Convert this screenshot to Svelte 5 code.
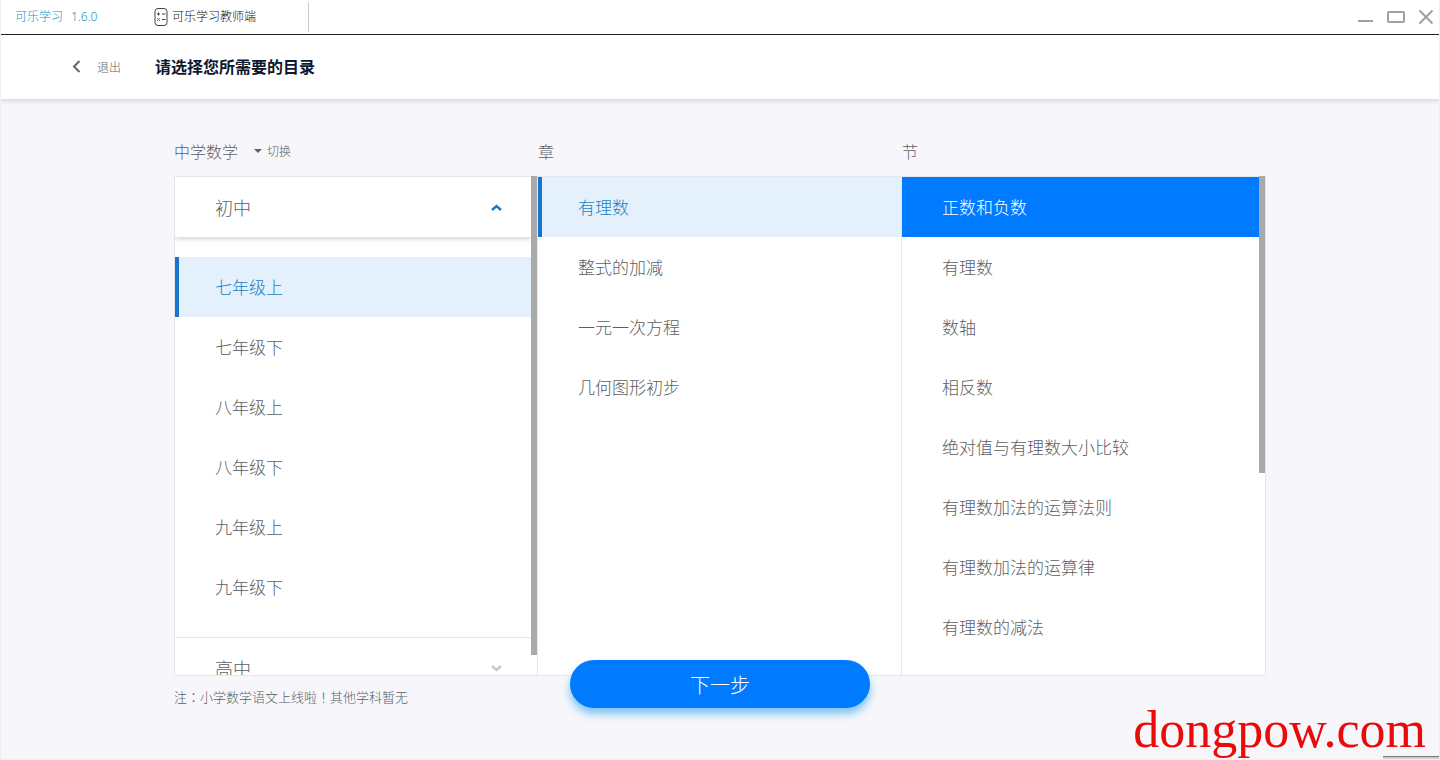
<script lang="ts">
	const grades = ['七年级上', '七年级下', '八年级上', '八年级下', '九年级上', '九年级下'];
	const chapters = ['有理数', '整式的加减', '一元一次方程', '几何图形初步'];
	const sections = [
		'正数和负数',
		'有理数',
		'数轴',
		'相反数',
		'绝对值与有理数大小比较',
		'有理数加法的运算法则',
		'有理数加法的运算律',
		'有理数的减法'
	];

	let grade = $state('七年级上');
	let chapter = $state('有理数');
	let section = $state('正数和负数');
	let juniorOpen = $state(true);
</script>

<div class="window">
	<div class="titlebar">
		<div class="brand"><span>可乐学习</span><span>1.6.0</span></div>
		<button class="tab">
			<svg width="14" height="20" viewBox="0 0 14 20" fill="none" stroke="#444" stroke-width="1">
				<rect x="1" y="1.5" width="12" height="17" rx="3" />
				<path d="M3 7h3M4.5 5.5v3M8 7h3.5M3.3 11.3l2.4 2.4M5.7 11.3l-2.4 2.4M8 12.5h3.5" />
			</svg>
			可乐学习教师端
		</button>
		<div class="window-controls">
			<button aria-label="最小化">
				<svg width="16" height="16" viewBox="0 0 16 16"><path d="M0 12h15" /></svg>
			</button>
			<button aria-label="最大化">
				<svg width="20" height="16" viewBox="0 0 20 16"><rect x="2" y="3" width="16" height="10" rx="1" /></svg>
			</button>
			<button aria-label="关闭">
				<svg width="16" height="16" viewBox="0 0 16 16"><path d="M1.5 1.5l13 13M14.5 1.5l-13 13" /></svg>
			</button>
		</div>
	</div>

	<header class="header">
		<button class="back">
			<svg width="10" height="14" viewBox="0 0 10 14" fill="none" stroke="#666" stroke-width="2">
				<path d="M8.5 1L3 6.5L8.5 12" />
			</svg>
			退出
		</button>
		<h1>请选择您所需要的目录</h1>
	</header>

	<main class="content">
		<div class="labels">
			<div class="label">
				中学数学
				<button class="switch"><i class="caret"></i>切换</button>
			</div>
			<div class="label">章</div>
			<div class="label">节</div>
		</div>

		<div class="board">
			<div class="column">
				<div class="list">
					<button class="group" class:open={juniorOpen} onclick={() => (juniorOpen = !juniorOpen)}>
						初中
						<svg width="12" height="8" viewBox="0 0 12 8" fill="none" stroke="#1478cc" stroke-width="2.4">
							<path d="M2 7l4.5-4 4.5 4" />
						</svg>
					</button>
					{#if juniorOpen}
						<div class="grades">
							{#each grades as name}
								<button class="item" class:active={grade === name} onclick={() => (grade = name)}>{name}</button>
							{/each}
						</div>
					{/if}
					<button class="group next-group">
						高中
						<svg width="12" height="8" viewBox="0 0 12 8" fill="none" stroke="#c8c8cc" stroke-width="2.4">
							<path d="M2 2l4.5 4 4.5-4" />
						</svg>
					</button>
				</div>
				<div class="track"><div class="thumb" style="height: 96%"></div></div>
			</div>

			<div class="column">
				<div class="list">
					{#each chapters as name}
						<button class="item" class:active={chapter === name} onclick={() => (chapter = name)}>{name}</button>
					{/each}
				</div>
			</div>

			<div class="column">
				<div class="list">
					{#each sections as name}
						<button class="item" class:chosen={section === name} onclick={() => (section = name)}>{name}</button>
					{/each}
				</div>
				<div class="track"><div class="thumb" style="height: 59.5%"></div></div>
			</div>
		</div>

		<div class="footer">
			<p class="note">注：小学数学语文上线啦！其他学科暂无</p>
			<button class="next">下一步</button>
		</div>
	</main>

	<div class="watermark">dongpow.com</div>
	<div class="corner"></div>
</div>

<style>
	:global(body) {
		background: #f7f7fb;
	}

	.window {
		position: relative;
		box-sizing: border-box;
		min-height: 100vh;
		overflow: hidden;
		border: 1px solid #efeff2;
		border-top: 0;
		font-family: 'Noto Sans', 'Noto Sans CJK SC', sans-serif;
		font-weight: 300;
		color: #5c5e64;
	}

	button {
		margin: 0;
		padding: 0;
		border: 0;
		background: none;
		font: inherit;
		color: inherit;
		cursor: pointer;
	}

	.titlebar {
		display: flex;
		align-items: center;
		height: 34px;
		border-bottom: 1px solid #222;
		background: #fff;
		font-size: 12px;
		line-height: 16px;
	}

	.brand {
		display: flex;
		gap: 8px;
		width: 139px;
		padding-left: 14px;
		box-sizing: border-box;
		color: #2292c8;
	}

	.tab {
		display: flex;
		align-items: center;
		gap: 4px;
		width: 169px;
		height: 30px;
		padding-left: 14px;
		border-right: 1px solid #c8c8c8;
		box-sizing: border-box;
		color: #111;
	}

	.window-controls {
		display: flex;
		gap: 12px;
		margin-left: auto;
		padding-right: 5px;
	}

	.window-controls button {
		display: flex;
	}

	.window-controls svg {
		fill: none;
		stroke: #a0a0a0;
		stroke-width: 2;
	}

	.header {
		display: flex;
		align-items: center;
		height: 64px;
		padding-left: 70px;
		background: #fff;
		box-shadow: 0 2px 5px rgba(0, 0, 0, 0.14);
	}

	.back {
		display: flex;
		align-items: center;
		gap: 16px;
		margin-right: 34px;
		font-size: 12px;
		color: #666;
	}

	h1 {
		margin: 0;
		padding-bottom: 2px;
		font-size: 16px;
		font-weight: 700;
		color: #0c1830;
	}

	.content {
		max-width: 1092px;
		margin: 0 auto;
		padding: 29px 0 0;
	}

	.labels,
	.board {
		display: grid;
		grid-template-columns: repeat(3, 1fr);
	}

	.label {
		display: flex;
		align-items: center;
		gap: 16px;
		height: 48px;
		padding-bottom: 2px;
		box-sizing: border-box;
		font-size: 16px;
	}

	.switch {
		display: flex;
		align-items: center;
		gap: 5px;
		font-size: 12px;
	}

	.caret {
		border: 4px solid transparent;
		border-top-color: #606266;
		border-bottom: 0;
	}

	.board {
		height: calc(100vh - 260px);
		min-height: 300px;
		background: #fff;
	}

	.column {
		display: flex;
		min-height: 0;
		box-sizing: border-box;
		border: 1px solid #e4e6ec;
		border-left: 0;
	}

	.column:first-child {
		border-left: 1px solid #e4e6ec;
	}

	.list {
		flex: 1;
		overflow-y: auto;
		scrollbar-width: none;
	}

	.track {
		width: 6px;
		margin-top: -1px;
	}

	.thumb {
		background: #aaa;
	}

	.group {
		display: flex;
		align-items: center;
		justify-content: space-between;
		width: 100%;
		height: 60px;
		padding: 0 29px 0 40px;
		font-size: 18px;
	}

	.group.open {
		box-shadow: 0 2px 5px rgba(0, 0, 0, 0.18);
	}

	.next-group {
		border-top: 1px solid #e4e6ec;
	}

	.grades {
		padding: 20px 0;
	}

	.item {
		display: block;
		width: 100%;
		height: 60px;
		padding: 0 0 2px 40px;
		font-size: 17px;
		text-align: left;
	}

	.item.active {
		padding-left: 36px;
		border-left: 4px solid #1576cc;
		background: #e4f1fd;
		color: #1b7fc4;
	}

	.item.chosen {
		background: #007aff;
		color: #fff;
	}

	.footer {
		position: relative;
		padding: 11px 0;
	}

	/* the TC face centres the colon and exclamation mark */
	.note {
		margin: 0;
		font-family: 'Noto Sans CJK TC', 'Noto Sans CJK SC', sans-serif;
		font-size: 13px;
		line-height: 20px;
	}

	.next {
		position: absolute;
		top: -16px;
		left: 50%;
		width: 300px;
		height: 48px;
		border-radius: 24px;
		background: #007aff;
		box-shadow: 0 6px 8px rgba(0, 150, 240, 0.5);
		font-size: 20px;
		color: #fff;
		transform: translateX(-50%);
	}

	.watermark {
		position: absolute;
		right: 13px;
		bottom: 0;
		font-family: 'Liberation Serif', serif;
		font-size: 52px;
		font-weight: 400;
		line-height: 58px;
		color: #ea0a0a;
	}

	.corner {
		position: absolute;
		right: 0;
		bottom: 0;
		width: 56px;
		height: 2px;
		border-top: 1px solid #777;
		background: #d0d0d4;
	}
</style>
